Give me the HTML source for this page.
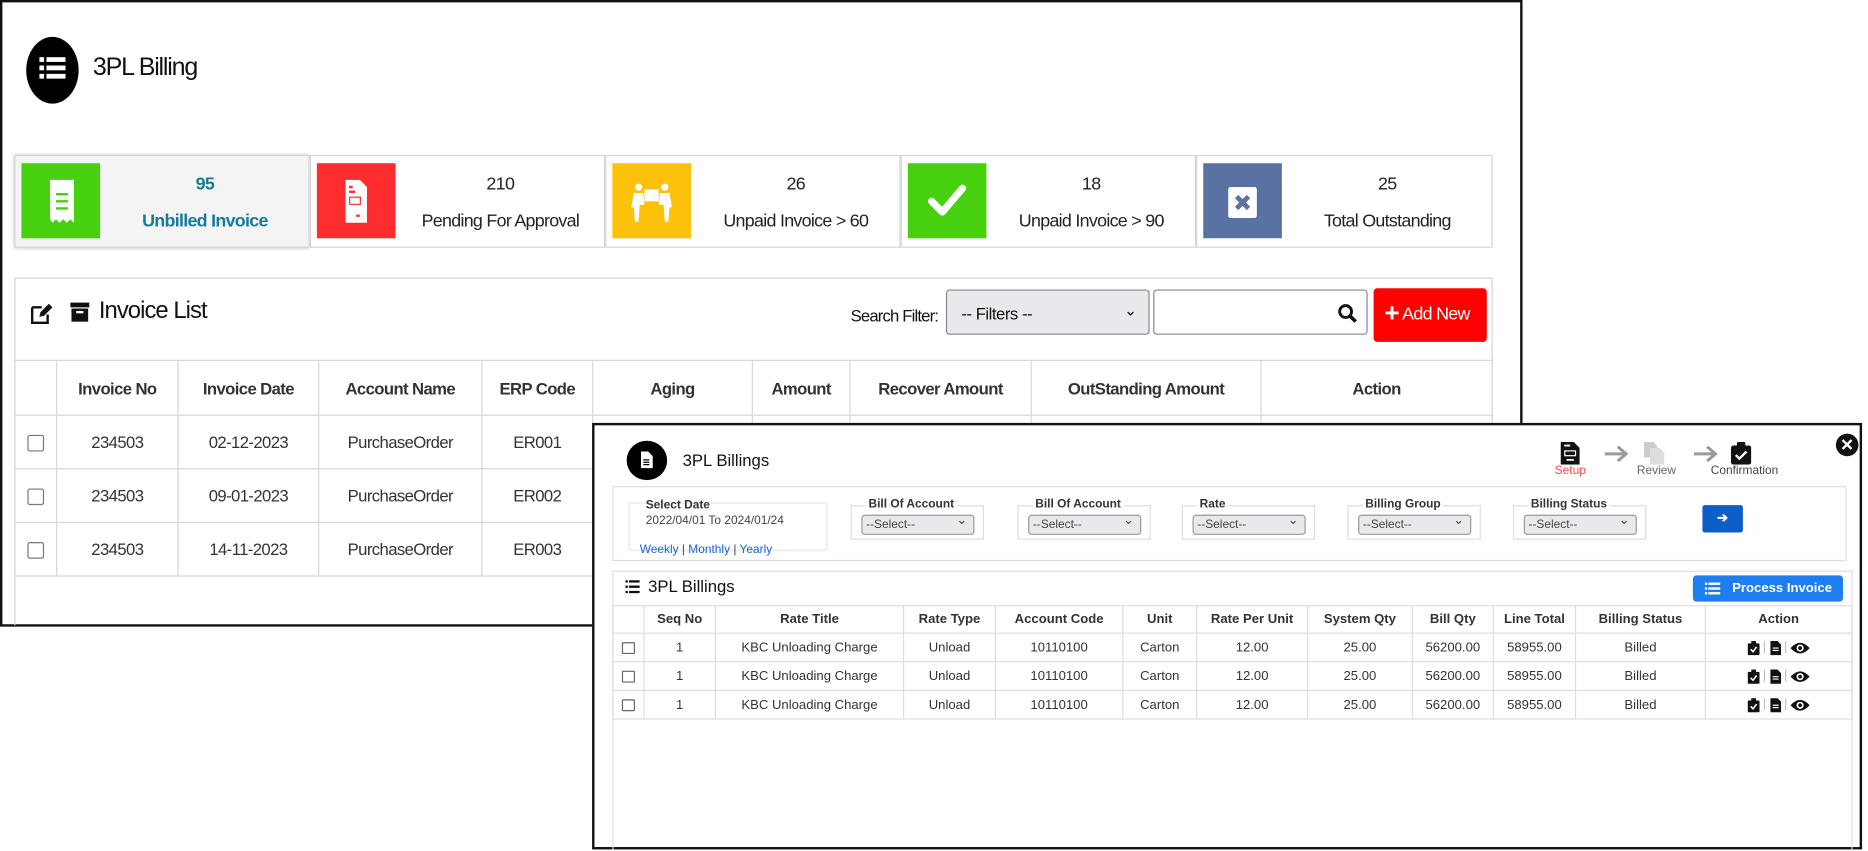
<!DOCTYPE html>
<html><head><meta charset="utf-8"><style>
*{box-sizing:border-box;margin:0;padding:0}
html,body{width:1868px;height:850px;overflow:hidden;background:#fff}
#w{position:absolute;left:0;top:0;width:1568px;height:714px;transform:scale(1.19133);transform-origin:0 0;font-family:"Liberation Sans",sans-serif;color:#222}
.a{position:absolute;white-space:nowrap}
.nr{letter-spacing:-0.6px}
.main{left:0;top:0;width:1278px;height:526px;border:2px solid #111;background:#fff}
.card{position:absolute;top:130px;height:78px;width:248px;border:1px solid #d4d4d4;background:#fff}
.card .ic{position:absolute;left:5px;top:6px;width:66px;height:63px}
.card .n{position:absolute;left:72px;right:0;top:15px;text-align:center;font-size:15px;letter-spacing:-0.5px}
.card .l{position:absolute;left:72px;right:0;top:46px;text-align:center;font-size:15px;letter-spacing:-0.6px}
table{border-collapse:collapse;position:absolute}
.t1 td,.t1 th{border:1px solid #d6d6d6;text-align:center;font-size:14px;color:#333;letter-spacing:-0.5px}
.t1 th{font-weight:bold;height:46px;font-size:14px}
.t1 td{height:45px}
.cb{display:inline-block;width:14px;height:14px;border:1.5px solid #777;border-radius:2px;vertical-align:middle}
.modal{left:497px;top:355px;width:1066px;height:358px;border:2px solid #111;background:#fff}
.grp{position:absolute;top:424px;width:112px;height:29px;border:1px solid #ddd}
.grp b{position:absolute;left:12px;top:-7px;background:#fff;padding:0 2px;font-size:10px;color:#333}
.sel{position:absolute;left:8px;top:7px;width:95px;height:17px;border:1px solid #999;border-radius:3px;background:#e9e9ed;font-size:10px;color:#444;padding-left:3px;line-height:15px}
.sel:after{content:"⌄";position:absolute;right:5px;top:-3px;font-size:11px}
.t2 td,.t2 th{border:1px solid #ddd;text-align:center;font-size:11px;color:#333;height:24px}
.t2 th{font-weight:bold;height:23px}
.cb2{display:inline-block;width:11px;height:10px;border:1.3px solid #666;border-radius:1px;vertical-align:middle}
.act svg{vertical-align:middle}
.act i{font-style:normal;color:#bbb;margin:0 3px}
</style></head><body><div id="w">
<div class="a main"></div>
<div class="a" style="left:22px;top:31px;width:44px;height:56px;border-radius:50%;background:#000"></div>
<svg class="a" style="left:33px;top:47px" width="22" height="20" viewBox="0 0 22 20"><g fill="#fff"><rect x="0" y="1" width="4" height="4"/><rect x="6" y="1" width="16" height="4"/><rect x="0" y="8" width="4" height="4"/><rect x="6" y="8" width="16" height="4"/><rect x="0" y="15" width="4" height="4"/><rect x="6" y="15" width="16" height="4"/></g></svg>
<div class="a" style="left:78px;top:45px;font-size:21px;color:#111;letter-spacing:-1px">3PL Billing</div>

<div class="card" style="left:12px;background:#f4f4f4;box-shadow:0 0 3px #bbb"><div class="ic" style="background:#46d00d"><svg width="66" height="63"><path d="M24 14h20v36l-3-3-3 3-3-3-3 3-3-3-3 3-2-3z" fill="#fff"/><path d="M29 26h10M29 32h10M29 38h10" stroke="#46d00d" stroke-width="2"/></svg></div><div class="n" style="color:#17799b;font-weight:bold">95</div><div class="l" style="color:#17799b;font-weight:bold">Unbilled Invoice</div></div>
<div class="card" style="left:260px"><div class="ic" style="background:#ff2d2d"><svg width="66" height="63"><path d="M24 14h12l6 6v30H24z" fill="#fff"/><rect x="27" y="28" width="10" height="7" fill="#ff2d2d"/><rect x="28" y="29" width="8" height="5" fill="#fff"/><path d="M27 20h3M27 24h5M33 44h3" stroke="#ff2d2d" stroke-width="2"/></svg></div><div class="n">210</div><div class="l">Pending For Approval</div></div>
<div class="card" style="left:508px"><div class="ic" style="background:#fdc00b"><svg width="66" height="63"><g fill="#fff"><circle cx="22" cy="20" r="3"/><circle cx="44" cy="20" r="3"/><rect x="27" y="22" width="12" height="10"/><path d="M18 25h8l1 10h-4l-1 14h-3l-1-12h-2z"/><path d="M48 25h-8l-1 10h4l1 14h3l1-12h2z"/></g></svg></div><div class="n">26</div><div class="l">Unpaid Invoice &gt; 60</div></div>
<div class="card" style="left:756px"><div class="ic" style="background:#46d00d"><svg width="66" height="63"><path d="M20 32l9 9 17-20" stroke="#fff" stroke-width="6" fill="none" stroke-linecap="round" stroke-linejoin="round"/></svg></div><div class="n">18</div><div class="l">Unpaid Invoice &gt; 90</div></div>
<div class="card" style="left:1004px;width:249px"><div class="ic" style="background:#5a72a3"><svg width="66" height="63"><rect x="21" y="20" width="24" height="26" rx="2" fill="#fff"/><path d="M28 28l10 10M38 28l-10 10" stroke="#5a72a3" stroke-width="4"/></svg></div><div class="n">25</div><div class="l">Total Outstanding</div></div>

<div class="a" style="left:12px;top:233px;width:1241px;height:292px;border:1px solid #d4d4d4;border-bottom:none"></div>
<svg class="a" style="left:25px;top:253px" width="20" height="20"><path d="M2 5h8M2 5v13h13v-7" stroke="#111" stroke-width="2" fill="none"/><path d="M8 13l1-4 7-7 3 3-7 7z" fill="#111"/></svg>
<svg class="a" style="left:59px;top:253px" width="16" height="18"><rect x="0" y="1" width="16" height="4" fill="#111"/><rect x="1" y="6" width="14" height="11" fill="#111"/><rect x="5" y="8" width="6" height="2" fill="#fff"/></svg>
<div class="a" style="left:83px;top:250px;font-size:20px;color:#111;letter-spacing:-0.8px">Invoice List</div>
<div class="a" style="left:714px;top:257px;font-size:14px;color:#111;letter-spacing:-0.7px">Search Filter:</div>
<div class="a" style="left:794px;top:243px;width:171px;height:38px;border:1px solid #888;border-radius:3px;background:#e9e9ed;font-size:14px;padding:11px 0 0 12px;color:#111;letter-spacing:-0.4px">-- Filters --<span style="position:absolute;right:10px;top:9px;font-size:13px">⌄</span></div>
<div class="a" style="left:968px;top:243px;width:180px;height:38px;border:1px solid #888;border-radius:3px"><svg class="a" style="right:8px;top:11px" width="16" height="16"><circle cx="6.5" cy="6.5" r="5" stroke="#111" stroke-width="2.4" fill="none"/><path d="M10 10l5 5" stroke="#111" stroke-width="3"/></svg></div>
<div class="a" style="left:1153px;top:242px;width:95px;height:45px;background:#ff0000;border-radius:3px;color:#fff;font-size:15px;padding:13px 0 0 9px;letter-spacing:-0.6px"><b style="font-size:22px;line-height:14px;vertical-align:-2px">+</b> Add New</div>

<table class="t1" style="left:12px;top:302px;width:1241px;background:#fff">
<tr><th style="width:35px"></th><th style="width:102px">Invoice No</th><th style="width:118px">Invoice Date</th><th style="width:137px">Account Name</th><th style="width:93px">ERP Code</th><th style="width:134px">Aging</th><th style="width:82px">Amount</th><th style="width:152px">Recover Amount</th><th style="width:193px">OutStanding Amount</th><th>Action</th></tr>
<tr><td><span class="cb"></span></td><td>234503</td><td>02-12-2023</td><td>PurchaseOrder</td><td>ER001</td><td></td><td></td><td></td><td></td><td></td></tr>
<tr><td><span class="cb"></span></td><td>234503</td><td>09-01-2023</td><td>PurchaseOrder</td><td>ER002</td><td></td><td></td><td></td><td></td><td></td></tr>
<tr><td><span class="cb"></span></td><td>234503</td><td>14-11-2023</td><td>PurchaseOrder</td><td>ER003</td><td></td><td></td><td></td><td></td><td></td></tr>
</table>

<div class="a modal"></div>
<div class="a" style="left:526px;top:370px;width:34px;height:33px;border-radius:50%;background:#000"></div>
<svg class="a" style="left:538px;top:379px" width="10" height="14"><path d="M0 0h6l4 4v10H0z" fill="#fff"/><path d="M2 7h5M2 9h5M2 11h5" stroke="#000" stroke-width="1"/></svg>
<div class="a" style="left:573px;top:378px;font-size:14px;color:#111">3PL Billings</div>
<svg class="a" style="left:1310px;top:371px" width="16" height="19"><path d="M0 0h11l5 5v14H0z" fill="#111"/><rect x="3" y="7" width="10" height="5" fill="#fff"/><rect x="4" y="8" width="8" height="3" fill="#111"/><path d="M3 3h5M5 15h6" stroke="#fff" stroke-width="1.5"/></svg>
<svg class="a" style="left:1346px;top:373px" width="22" height="16"><path d="M1 8h18M12 2l7 6-7 6" stroke="#999" stroke-width="2.5" fill="none"/></svg>
<svg class="a" style="left:1378px;top:371px" width="20" height="19"><path d="M2 0h8l3 3v10H2z" fill="#ccc"/><path d="M7 5h8l4 4v10H7z" fill="#ddd"/></svg>
<svg class="a" style="left:1421px;top:373px" width="22" height="16"><path d="M1 8h18M12 2l7 6-7 6" stroke="#999" stroke-width="2.5" fill="none"/></svg>
<svg class="a" style="left:1453px;top:371px" width="17" height="19"><rect x="0" y="3" width="17" height="16" rx="2" fill="#111"/><rect x="5" y="0" width="7" height="5" rx="1" fill="#111"/><path d="M4 11l3 3 6-6" stroke="#fff" stroke-width="2" fill="none"/></svg>
<div class="a" style="left:1305px;top:390px;font-size:10px;color:#ff4b4b">Setup</div>
<div class="a" style="left:1374px;top:390px;font-size:10px;color:#666">Review</div>
<div class="a" style="left:1436px;top:390px;font-size:10px;color:#444">Confirmation</div>
<div class="a" style="left:1541px;top:364px;width:19px;height:19px;border-radius:50%;background:#111;color:#fff;font-size:14px;font-weight:bold;text-align:center;line-height:19px">✕</div>

<div class="a" style="left:514px;top:408px;width:1036px;height:63px;border:1px solid #ddd"></div>
<div class="a" style="left:528px;top:422px;width:166px;height:40px;border:1px solid #eee;box-shadow:0 0 2px #ddd"></div>
<div class="a" style="left:542px;top:419px;font-size:10px;font-weight:bold;color:#333">Select Date</div>
<div class="a" style="left:542px;top:432px;font-size:10px;color:#444">2022/04/01 To 2024/01/24</div>
<div class="a" style="left:537px;top:456px;font-size:10px;color:#444"><span style="color:#1a63d8">Weekly</span> | <span style="color:#1a63d8">Monthly</span> | <span style="color:#1a63d8">Yearly</span></div>
<div class="grp" style="left:714px"><b>Bill Of Account</b><div class="sel">--Select--</div></div>
<div class="grp" style="left:854px"><b>Bill Of Account</b><div class="sel">--Select--</div></div>
<div class="grp" style="left:992px"><b>Rate</b><div class="sel">--Select--</div></div>
<div class="grp" style="left:1131px"><b>Billing Group</b><div class="sel">--Select--</div></div>
<div class="grp" style="left:1270px"><b>Billing Status</b><div class="sel">--Select--</div></div>
<div class="a" style="left:1429px;top:424px;width:34px;height:23px;background:#0d5fc8;border-radius:2px;color:#fff;text-align:center;font-size:11px;line-height:22px;font-weight:bold">➔</div>

<div class="a" style="left:514px;top:479px;width:1041px;height:234px;border:1px solid #ddd;border-bottom:none"></div>
<svg class="a" style="left:525px;top:487px" width="12" height="11"><g fill="#111"><rect x="0" y="0" width="2" height="2"/><rect x="3" y="0" width="9" height="2"/><rect x="0" y="4.5" width="2" height="2"/><rect x="3" y="4.5" width="9" height="2"/><rect x="0" y="9" width="2" height="2"/><rect x="3" y="9" width="9" height="2"/></g></svg>
<div class="a" style="left:544px;top:484px;font-size:14px;color:#111">3PL Billings</div>
<div class="a" style="left:1421px;top:483px;width:126px;height:22px;background:#1e7ef0;border-radius:3px;color:#fff;font-size:11px;font-weight:bold;line-height:22px;padding-left:33px">Process Invoice</div>
<svg class="a" style="left:1431px;top:489px" width="13" height="10"><g fill="#fff"><rect x="0" y="0" width="2" height="2"/><rect x="3" y="0" width="10" height="2"/><rect x="0" y="4" width="2" height="2"/><rect x="3" y="4" width="10" height="2"/><rect x="0" y="8" width="2" height="2"/><rect x="3" y="8" width="10" height="2"/></g></svg>

<table class="t2" style="left:514px;top:508px;width:1041px">
<tr><th style="width:26px"></th><th style="width:60px">Seq No</th><th style="width:158px">Rate Title</th><th style="width:77px">Rate Type</th><th style="width:107px">Account Code</th><th style="width:62px">Unit</th><th style="width:93px">Rate Per Unit</th><th style="width:88px">System Qty</th><th style="width:68px">Bill Qty</th><th style="width:69px">Line Total</th><th style="width:109px">Billing Status</th><th>Action</th></tr>
<tr><td><span class="cb2"></span></td><td>1</td><td>KBC Unloading Charge</td><td>Unload</td><td>10110100</td><td>Carton</td><td>12.00</td><td>25.00</td><td>56200.00</td><td>58955.00</td><td>Billed</td><td class="act"><svg width="10" height="12"><rect x="0" y="2" width="10" height="10" rx="1" fill="#111"/><rect x="3" y="0" width="4" height="3" fill="#111"/><path d="M2.5 7l2 2 3-4" stroke="#fff" stroke-width="1.3" fill="none"/></svg><i>|</i><svg width="9" height="12"><path d="M0 0h6l3 3v9H0z" fill="#111"/><path d="M2 6h5M2 8h5" stroke="#fff"/></svg><i>|</i><svg width="16" height="12"><path d="M0 6Q8-3 16 6Q8 15 0 6z" fill="#111"/><circle cx="8" cy="6" r="3" fill="#fff"/><circle cx="8" cy="6" r="1.6" fill="#111"/></svg></td></tr>
<tr><td><span class="cb2"></span></td><td>1</td><td>KBC Unloading Charge</td><td>Unload</td><td>10110100</td><td>Carton</td><td>12.00</td><td>25.00</td><td>56200.00</td><td>58955.00</td><td>Billed</td><td class="act"><svg width="10" height="12"><rect x="0" y="2" width="10" height="10" rx="1" fill="#111"/><rect x="3" y="0" width="4" height="3" fill="#111"/><path d="M2.5 7l2 2 3-4" stroke="#fff" stroke-width="1.3" fill="none"/></svg><i>|</i><svg width="9" height="12"><path d="M0 0h6l3 3v9H0z" fill="#111"/><path d="M2 6h5M2 8h5" stroke="#fff"/></svg><i>|</i><svg width="16" height="12"><path d="M0 6Q8-3 16 6Q8 15 0 6z" fill="#111"/><circle cx="8" cy="6" r="3" fill="#fff"/><circle cx="8" cy="6" r="1.6" fill="#111"/></svg></td></tr>
<tr><td><span class="cb2"></span></td><td>1</td><td>KBC Unloading Charge</td><td>Unload</td><td>10110100</td><td>Carton</td><td>12.00</td><td>25.00</td><td>56200.00</td><td>58955.00</td><td>Billed</td><td class="act"><svg width="10" height="12"><rect x="0" y="2" width="10" height="10" rx="1" fill="#111"/><rect x="3" y="0" width="4" height="3" fill="#111"/><path d="M2.5 7l2 2 3-4" stroke="#fff" stroke-width="1.3" fill="none"/></svg><i>|</i><svg width="9" height="12"><path d="M0 0h6l3 3v9H0z" fill="#111"/><path d="M2 6h5M2 8h5" stroke="#fff"/></svg><i>|</i><svg width="16" height="12"><path d="M0 6Q8-3 16 6Q8 15 0 6z" fill="#111"/><circle cx="8" cy="6" r="3" fill="#fff"/><circle cx="8" cy="6" r="1.6" fill="#111"/></svg></td></tr>
</table>
</div></body></html>
